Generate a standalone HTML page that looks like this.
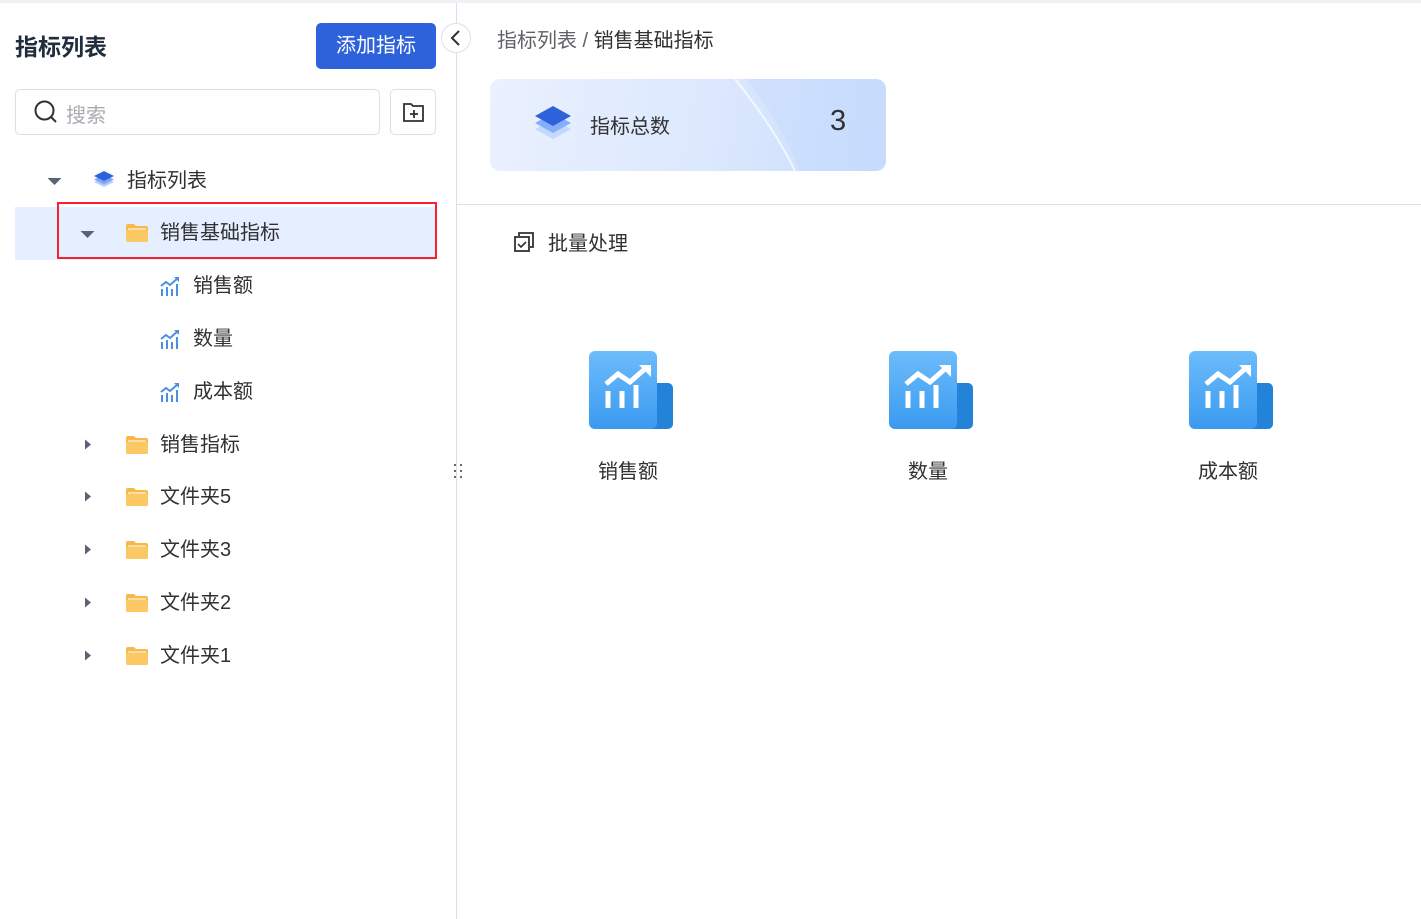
<!DOCTYPE html>
<html><head><meta charset="utf-8"><style>
*{margin:0;padding:0;box-sizing:border-box}
body{width:1421px;height:919px;background:#fff;font-family:"Liberation Sans","Noto Sans CJK SC",sans-serif;color:#1f2937;position:relative;overflow:hidden}
.abs{position:absolute}
.top{left:0;top:0;width:1421px;height:3px;background:#eef1f6}
.side{left:0;top:3px;width:457px;height:916px;border-right:1px solid #dcdfe6}
.title{left:15px;top:28px;font-size:23px;font-weight:bold;color:#1f2d3d}
.btn{left:316px;top:23px;width:120px;height:46px;background:#2e62da;border-radius:5px;color:#fff;font-size:20px;text-align:center;line-height:46px}
.search{left:15px;top:89px;width:365px;height:46px;border:1px solid #dcdfe6;border-radius:5px}
.search span{position:absolute;left:50px;top:9px;font-size:20px;color:#a8abb2}
.fbtn{left:390px;top:89px;width:46px;height:46px;border:1px solid #dcdfe6;border-radius:5px}
.row{height:53px;font-size:20px;color:#303133;line-height:53px}
.sel{left:15px;top:207px;width:421px;height:53px;background:#e6efff}
.selbox{left:57px;top:202px;width:380px;height:57px;border:2px solid #f5222d}
.collapse{left:441px;top:23px;width:30px;height:30px;border:1px solid #dcdfe6;border-radius:50%;background:#fff}
.crumb{left:497px;top:24px;font-size:20px;color:#303133}
.card{left:490px;top:79px;width:396px;height:92px;border-radius:10px;background:linear-gradient(100deg,#eaf1ff 0%,#dce8fd 55%,#c9ddfd 100%);overflow:hidden}
.hr{left:457px;top:204px;width:964px;height:1px;background:#dcdfe6}
.tile{width:84px;height:78px}
.lbl{font-size:20px;color:#303133;width:120px;text-align:center}
</style></head><body>
<div class="abs top"></div>
<div class="abs side"></div>
<div class="abs title">指标列表</div>
<div class="abs btn">添加指标</div>
<div class="abs search"><svg class="abs" style="left:17px;top:9px" width="26" height="26" viewBox="0 0 26 26"><circle cx="11.5" cy="11.5" r="9" fill="none" stroke="#303133" stroke-width="2"/><path d="M18 18l5 5" stroke="#303133" stroke-width="2"/></svg><span>搜索</span></div>
<div class="abs fbtn"><svg class="abs" style="left:12px;top:12px" width="22" height="20" viewBox="0 0 22 20"><path d="M1 2h7l2 2h10v15H1z" fill="none" stroke="#303133" stroke-width="1.8"/><path d="M11 8v8M7 12h8" stroke="#303133" stroke-width="1.8"/></svg></div>
<div class="abs collapse"><svg class="abs" style="left:7px;top:5px" width="14" height="18" viewBox="0 0 14 18"><path d="M10 2L3 9l7 7" fill="none" stroke="#303133" stroke-width="2"/></svg></div>
<div class="abs" style="left:452px;top:462px;width:12px;height:18px;background:radial-gradient(circle,#606266 1px,transparent 1.3px) 0 0/6px 6px"></div>

<div class="abs sel"></div>
<div class="abs selbox"></div>

<svg width="0" height="0" style="position:absolute"><defs>
<symbol id="fold" viewBox="0 0 24 20"><path d="M1 3a2 2 0 0 1 2-2h6l2 2h10a2 2 0 0 1 2 2v12a2 2 0 0 1-2 2H3a2 2 0 0 1-2-2z" fill="#f6b94a"/><path d="M1 7h22v10a2 2 0 0 1-2 2H3a2 2 0 0 1-2-2z" fill="#fbc863"/><path d="M3 6h18" stroke="#fff" stroke-width="1"/></symbol>
<symbol id="chart" viewBox="0 0 22 22"><path d="M2 11l5-4 4 3 8-7" fill="none" stroke="#4a90e2" stroke-width="2"/><path d="M15 2h5v5z" fill="#4a90e2"/><path d="M3 14v7M8 12v9M13 14v7M18 9v12" stroke="#4a90e2" stroke-width="2"/></symbol>
<symbol id="tri" viewBox="0 0 10 10"><path d="M2 0l6 5-6 5z" fill="#5a6275"/></symbol>
<symbol id="trid" viewBox="0 0 14 10"><path d="M0 2h14l-7 7z" fill="#5a6275"/></symbol>
</defs></svg>

<svg class="abs" style="left:47px;top:176px" width="15" height="10"><use href="#trid"/></svg>
<svg class="abs" style="left:92px;top:169px" width="24" height="24" viewBox="0 0 24 24"><path d="M2 13l10 5 10-5-10-5z" fill="#b7cffb"/><path d="M2 10.5l10 5 10-5-10-5z" fill="#7ba7f7"/><path d="M2 7l10 5 10-5-10-5z" fill="#2e62da"/></svg>
<div class="abs row" style="left:127px;top:155px">指标列表</div>

<svg class="abs" style="left:80px;top:229px" width="15" height="10"><use href="#trid"/></svg>
<svg class="abs" style="left:125px;top:223px" width="24" height="20"><use href="#fold"/></svg>
<div class="abs row" style="left:160px;top:207px">销售基础指标</div>

<svg class="abs" style="left:159px;top:275px" width="22" height="22"><use href="#chart"/></svg>
<div class="abs row" style="left:193px;top:260px">销售额</div>
<svg class="abs" style="left:159px;top:328px" width="22" height="22"><use href="#chart"/></svg>
<div class="abs row" style="left:193px;top:313px">数量</div>
<svg class="abs" style="left:159px;top:381px" width="22" height="22"><use href="#chart"/></svg>
<div class="abs row" style="left:193px;top:366px">成本额</div>

<svg class="abs" style="left:83px;top:437px" width="10" height="15"><use href="#tri"/></svg>
<svg class="abs" style="left:125px;top:435px" width="24" height="20"><use href="#fold"/></svg>
<div class="abs row" style="left:160px;top:419px">销售指标</div>
<svg class="abs" style="left:83px;top:489px" width="10" height="15"><use href="#tri"/></svg>
<svg class="abs" style="left:125px;top:487px" width="24" height="20"><use href="#fold"/></svg>
<div class="abs row" style="left:160px;top:471px">文件夹5</div>
<svg class="abs" style="left:83px;top:542px" width="10" height="15"><use href="#tri"/></svg>
<svg class="abs" style="left:125px;top:540px" width="24" height="20"><use href="#fold"/></svg>
<div class="abs row" style="left:160px;top:524px">文件夹3</div>
<svg class="abs" style="left:83px;top:595px" width="10" height="15"><use href="#tri"/></svg>
<svg class="abs" style="left:125px;top:593px" width="24" height="20"><use href="#fold"/></svg>
<div class="abs row" style="left:160px;top:577px">文件夹2</div>
<svg class="abs" style="left:83px;top:648px" width="10" height="15"><use href="#tri"/></svg>
<svg class="abs" style="left:125px;top:646px" width="24" height="20"><use href="#fold"/></svg>
<div class="abs row" style="left:160px;top:630px">文件夹1</div>

<div class="abs crumb"><span style="color:#606266">指标列表</span><span style="color:#606266">&nbsp;/&nbsp;</span>销售基础指标</div>
<div class="abs card">
<svg class="abs" style="left:0;top:0" width="396" height="92"><path d="M255 0L396 0L396 92L310 92Q290 40 255 0z" fill="#c0d6fb" opacity=".35"/><path d="M245 0Q285 50 305 92" stroke="#fff" stroke-width="2" fill="none" opacity=".7"/></svg>
<svg class="abs" style="left:43px;top:26px" width="40" height="38" viewBox="0 0 40 38"><path d="M2 24l18 10 18-10-18-10z" fill="#c4d8fd"/><path d="M2 18l18 10 18-10-18-10z" fill="#86aefb"/><path d="M2 11l18 10 18-10L20 1z" fill="#2e62da"/></svg>
<div class="abs" style="left:100px;top:31px;font-size:20px;color:#303133">指标总数</div>
<div class="abs" style="left:340px;top:26px;font-size:29px;color:#303133">3</div>
</div>
<div class="abs hr"></div>
<svg class="abs" style="left:513px;top:231px" width="22" height="22" viewBox="0 0 22 22"><path d="M6 5V2h14v14h-3" fill="none" stroke="#303133" stroke-width="1.8"/><rect x="2" y="6" width="14" height="14" fill="none" stroke="#303133" stroke-width="1.8"/><path d="M5 13l3 3 5-5" fill="none" stroke="#303133" stroke-width="1.6"/></svg>
<div class="abs" style="left:548px;top:227px;font-size:20px;color:#303133">批量处理</div>

<svg width="0" height="0" style="position:absolute"><defs>
<linearGradient id="g1" x1="0" y1="0" x2="0" y2="1"><stop offset="0" stop-color="#6dbcfb"/><stop offset="1" stop-color="#3a9af0"/></linearGradient>
<symbol id="tile" viewBox="0 0 84 78"><rect x="50" y="32" width="34" height="46" rx="5" fill="#2383d9"/><rect x="0" y="0" width="68" height="78" rx="6" fill="url(#g1)"/><path d="M17 33l12-10 12 8 16-14" fill="none" stroke="#fff" stroke-width="5"/><path d="M50 14h12v12z" fill="#fff"/><path d="M19 40v17M33 40v17M47 34v23" stroke="#fff" stroke-width="5"/></symbol>
</defs></svg>
<svg class="abs tile" style="left:589px;top:351px"><use href="#tile"/></svg>
<div class="abs lbl" style="left:568px;top:455px">销售额</div>
<svg class="abs tile" style="left:889px;top:351px"><use href="#tile"/></svg>
<div class="abs lbl" style="left:868px;top:455px">数量</div>
<svg class="abs tile" style="left:1189px;top:351px"><use href="#tile"/></svg>
<div class="abs lbl" style="left:1168px;top:455px">成本额</div>
</body></html>
